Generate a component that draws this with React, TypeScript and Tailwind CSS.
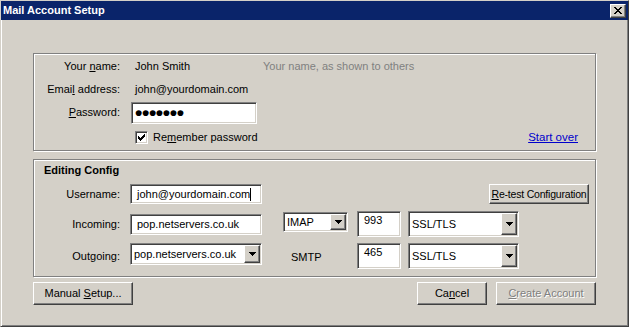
import React from "react";

// classic win9x bevels
const sunken =
  "border border-t-[#808080] border-l-[#808080] border-b-white border-r-white shadow-[inset_1px_1px_0_#404040,inset_-1px_-1px_0_#d4d0c8] bg-white";
const raised =
  "border border-t-white border-l-white border-b-[#404040] border-r-[#404040] shadow-[inset_-1px_-1px_0_#808080] bg-[#d4d0c8]";
const etched = "border border-[#808080] shadow-[inset_1px_1px_0_#fff,1px_1px_0_#fff]";

function Arrow() {
  return (
    <svg width="7" height="4" viewBox="0 0 7 4" shapeRendering="crispEdges">
      <path d="M0 0h7v1h-1v1h-1v1h-1v1h-1v-1h-1v-1h-1v-1h-1z" fill="#000" />
    </svg>
  );
}

function Select({ value, className }: { value: string; className: string }) {
  return (
    <div className={`${sunken} flex items-stretch p-[1px] ${className}`}>
      <span className="flex-1 flex items-center pl-[2px] whitespace-nowrap overflow-hidden">{value}</span>
      <div className={`w-[16px] flex items-center justify-center ${raised}`}>
        <Arrow />
      </div>
    </div>
  );
}

function Label({ children }: { children: React.ReactNode }) {
  return <div className="w-[86px] text-right shrink-0">{children}</div>;
}

function Button({ children, className, disabled }: { children: React.ReactNode; className: string; disabled?: boolean }) {
  return (
    <div
      className={`${raised} flex items-center justify-center whitespace-nowrap ${className} ${
        disabled ? "text-[#808080] [text-shadow:1px_1px_0_#fff]" : ""
      }`}
    >
      {children}
    </div>
  );
}

export default function App() {
  return (
    <div className="w-[629px] h-[327px] bg-[#d4d0c8] border border-t-[#d4d0c8] border-l-[#d4d0c8] border-b-[#404040] border-r-[#404040] shadow-[inset_1px_1px_0_#fff,inset_-1px_-1px_0_#808080] flex flex-col font-['Liberation_Sans',Arial,sans-serif] text-[11px] text-black leading-[13px]">
      <div className="h-[19px] bg-[#0a246a] flex items-center pl-[2px] pr-[2px] shrink-0">
        <span className="text-white font-bold">Mail Account Setup</span>
        <div className={`ml-auto w-[16px] h-[14px] flex items-center justify-center ${raised}`}>
          <svg width="8" height="7" viewBox="0 0 8 7" shapeRendering="crispEdges">
            <path d="M0 0h2l2 2.5L6 0h2L5 3.5 8 7H6L4 4.5 2 7H0l3-3.5z" fill="#000" />
          </svg>
        </div>
      </div>

      <div className="flex flex-col px-[32px] pt-[33px]">
        {/* account */}
        <div className={`h-[98px] flex flex-col pt-[1px] ${etched}`}>
          <div className="flex items-center h-[23px]">
            <Label>
              Your <span className="underline">n</span>ame:
            </Label>
            <div className="ml-[15px] w-[128px]">John Smith</div>
            <div className="text-[#808080]">Your name, as shown to others</div>
          </div>
          <div className="flex items-center h-[23px]">
            <Label>
              Emai<span className="underline">l</span> address:
            </Label>
            <div className="ml-[15px]">john@yourdomain.com</div>
          </div>
          <div className="flex items-center h-[23px]">
            <Label>
              <span className="underline">P</span>assword:
            </Label>
            <div className={`ml-[11px] w-[126px] h-[22px] flex items-center pl-[3px] ${sunken}`}>
              <span className="text-[21px] leading-none font-bold tracking-[-0.4px]">•••••••</span>
            </div>
          </div>
          <div className="flex items-center h-[26px]">
            <div className="w-[86px] shrink-0" />
            <div className={`ml-[15px] w-[13px] h-[13px] flex items-center justify-center ${sunken}`}>
              <svg width="7" height="7" viewBox="0 0 7 7" shapeRendering="crispEdges">
                <path d="M6 0h1v3h-1v1h-1v1h-1v1h-1v1h-1v-1h-1v-1h-1v-3h1v1h1v1h1v-1h1v-1h1z" fill="#000" />
              </svg>
            </div>
            <div className="ml-[5px]">
              Re<span className="underline">m</span>ember password
            </div>
            <div className="ml-auto mr-[17px] text-[11.5px] text-[#0000cc] underline">Start over</div>
          </div>
        </div>

        {/* config */}
        <div className={`mt-[8px] h-[118px] flex flex-col ${etched}`}>
          <div className="h-[20px] flex items-center pl-[10px] font-bold">Editing Config</div>
          <div className="mt-[4px] flex items-center h-[20px]">
            <Label>Username:</Label>
            <div className={`ml-[10px] w-[132px] h-[20px] flex items-center pl-[6px] ${sunken}`}>
              john@yourdomain.com
              <span className="inline-block w-[1px] h-[13px] bg-black" />
            </div>
            <Button className="ml-auto mr-[6px] w-[100px] h-[20px] text-[10.5px] tracking-[-0.2px]">
              <span>
                <span className="underline">R</span>e-test Configuration
              </span>
            </Button>
          </div>
          <div className="mt-[7px] flex items-start h-[26px]">
            <div className="self-center">
              <Label>Incoming:</Label>
            </div>
            <div className={`ml-[10px] mt-[3px] w-[132px] h-[21px] flex items-center pl-[6px] ${sunken}`}>
              pop.netservers.co.uk
            </div>
            <Select value="IMAP" className="ml-[21px] mt-[1px] w-[65px] h-[20px]" />
            <div className={`ml-[9px] w-[44px] h-[26px] pl-[6px] pt-[2px] ${sunken}`}>993</div>
            <Select value="SSL/TLS" className="ml-[7px] w-[111px] h-[26px]" />
          </div>
          <div className="mt-[6px] flex items-start h-[26px]">
            <div className="self-center">
              <Label>Outgoing:</Label>
            </div>
            <Select value="pop.netservers.co.uk" className="ml-[10px] w-[132px] h-[22px]" />
            <div className="ml-[21px] w-[65px] self-center pl-[8px] pt-[2px]">SMTP</div>
            <div className={`ml-[9px] w-[44px] h-[26px] pl-[6px] pt-[2px] ${sunken}`}>465</div>
            <Select value="SSL/TLS" className="ml-[7px] w-[111px] h-[26px]" />
          </div>
        </div>

        {/* buttons */}
        <div className="mt-[5px] flex items-center">
          <Button className="w-[100px] h-[23px]">
            <span>
              Manual <span className="underline">S</span>etup...
            </span>
          </Button>
          <Button className="ml-auto w-[70px] h-[23px]">
            <span>
              Ca<span className="underline">n</span>cel
            </span>
          </Button>
          <Button className="ml-[9px] w-[100px] h-[23px]" disabled>
            <span>
              <span className="underline">C</span>reate Account
            </span>
          </Button>
        </div>
      </div>
    </div>
  );
}
